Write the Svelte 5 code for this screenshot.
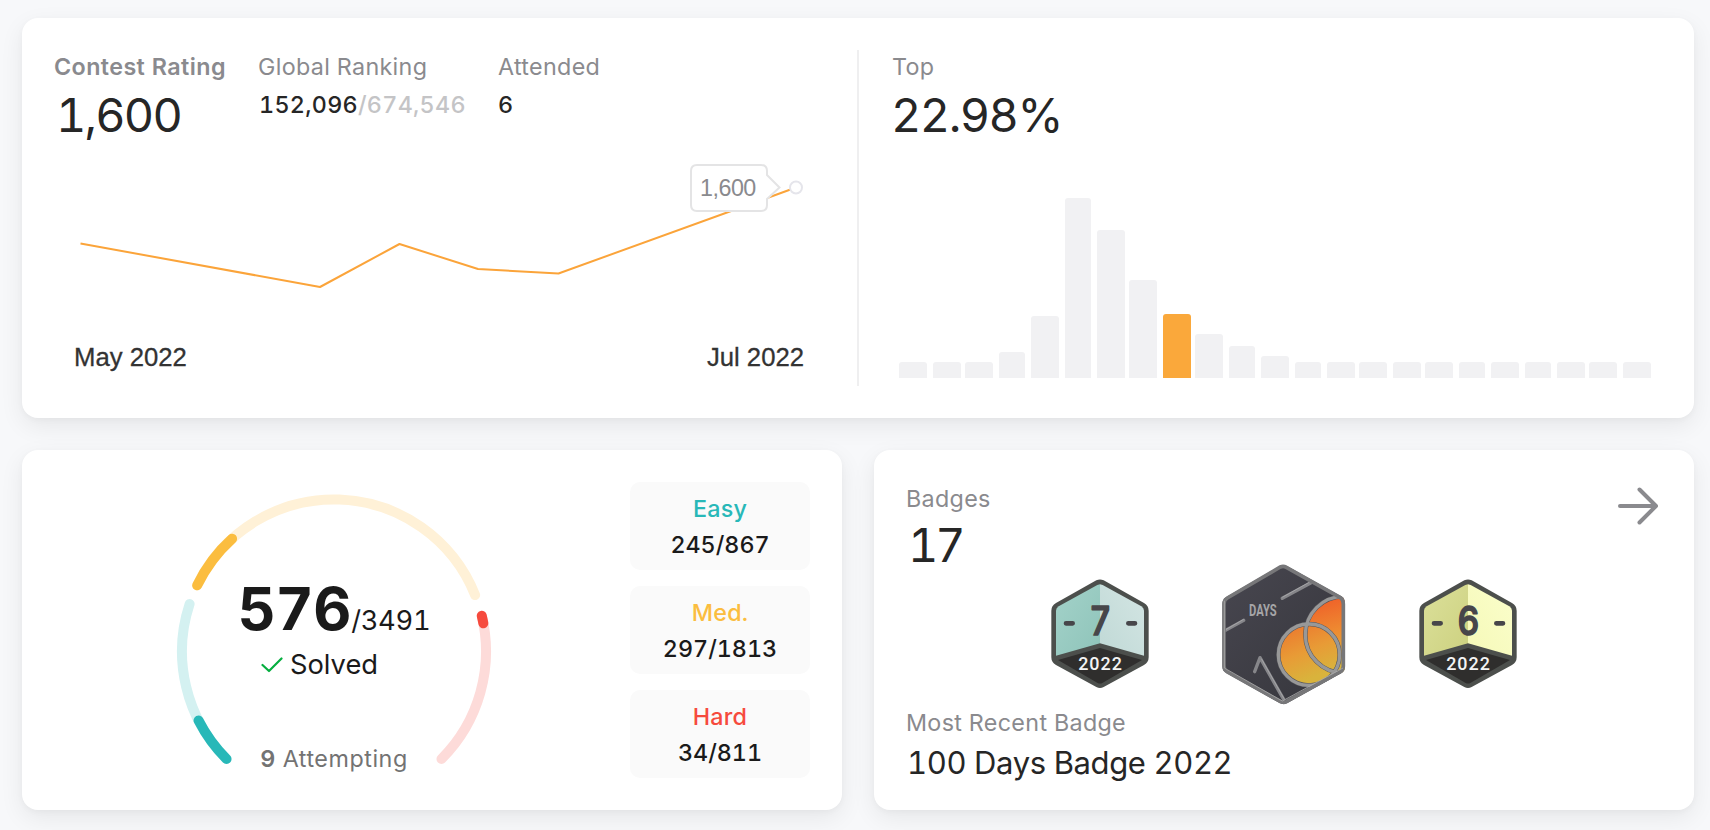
<script>
  const bars = [
    [899, 28, 16], [933, 28, 16], [965, 28, 16], [999, 26, 26], [1031, 28, 62], [1065, 26, 180],
    [1097, 28, 148], [1129, 28, 98], [1163, 28, 64], [1195, 28, 44], [1229, 26, 32], [1261, 28, 22],
    [1295, 26, 16], [1327, 28, 16], [1359, 28, 16], [1393, 28, 16], [1425, 28, 16], [1459, 26, 16],
    [1491, 28, 16], [1525, 26, 16], [1557, 28, 16], [1589, 28, 16], [1623, 28, 16]
  ];
  const current = 8;
  const bar = ([x, w, h]) => {
    const l = x - 892;
    return `M${l} 180V${183 - h}a3 3 0 0 1 3-3h${w - 6}a3 3 0 0 1 3 3V180z`;
  };

  // Angles run clockwise in degrees, measured from the leftmost point of the ring.
  const point = (deg) => {
    const a = (deg * Math.PI) / 180;
    return `${(160 - 152 * Math.cos(a)).toFixed(2)} ${(160.5 - 152 * Math.sin(a)).toFixed(2)}`;
  };
  const arc = (from, to) => `M${point(from)}A152 152 0 0 1 ${point(to)}`;
  const arcs = [
    { from: -45, fill: -27, to: 18.2, track: '#d4f1f1', color: '#28b8b8' },
    { from: 25.8, fill: 47.9, to: 158.2, track: '#fff1d7', color: '#fbbd3f' },
    { from: 166.4, fill: 169.3, to: 225, track: '#fddbd9', color: '#f64a3d' }
  ];
  const levels = [
    { name: 'Easy', count: '245/867', cls: 'easy' },
    { name: 'Med.', count: '297/1813', cls: 'med' },
    { name: 'Hard', count: '34/811', cls: 'hard' }
  ];
</script>

{#snippet monthly(id, digit, l1, l2, r1, r2)}
  <svg width="100" height="112" viewBox="510 384 300 336">
    <defs>
      <linearGradient id="{id}l" x1="0" y1="0" x2="1" y2="1">
        <stop offset="0" stop-color={l1} /><stop offset="1" stop-color={l2} />
      </linearGradient>
      <linearGradient id="{id}r" x1="0" y1="1" x2="1" y2="0">
        <stop offset="0" stop-color={r1} /><stop offset="1" stop-color={r2} />
      </linearGradient>
    </defs>
    <path d="M649 391Q660 386 671 391L792 459Q806 467 806 482V622Q806 637 792 645L671 711Q660 717 649 711L528 645Q514 637 514 622V482Q514 467 528 459Z" fill="#4c4f4c" />
    <path d="M660 403V580L528 617V482Q528 474 536 469L652 405Z" fill="url(#{id}l)" />
    <path d="M660 403V580L792 617V482Q792 474 784 469L668 405Z" fill="url(#{id}r)" />
    <path d="M660 594L786 630L667 699Q660 702 653 699L534 630Z" fill="#2f2e2d" />
    <path d="M558 520H578M745 520H765" stroke="#47464a" stroke-width="14" stroke-linecap="round" />
    <text class="digit" transform="translate(661 555) scale(.86 1)" text-anchor="middle">{digit}</text>
    <text class="year" x="661.5" y="659" textLength="134" lengthAdjust="spacingAndGlyphs" text-anchor="middle">2022</text>
  </svg>
{/snippet}

<main>
  <section class="card contest">
    <div class="rating">
      <div class="stats">
        <div class="stat first">
          <div class="label strong">Contest Rating</div>
          <div class="big rate">1,600</div>
        </div>
        <div class="stat second">
          <div class="label">Global Ranking</div>
          <div class="small world"><span class="rank">152,096</span><span class="total">/674,546</span></div>
        </div>
        <div class="stat">
          <div class="label">Attended</div>
          <div class="small">6</div>
        </div>
      </div>
      <svg class="line" width="772" height="190" viewBox="54 150 772 190">
        <polyline points="80.500,243.500 320,287 399.500,244 478,269 558.500,273.500 796,187.500" fill="none" stroke="#fba43a" stroke-width="2" stroke-linejoin="round" />
        <path d="M697 165H761Q767 165 767 171V175L779.500 187.500L767 199V205Q767 211 761 211H697Q691 211 691 205V171Q691 165 697 165Z" fill="#fff" stroke="#e4e4e5" stroke-width="2" />
        <circle cx="796" cy="187.500" r="6" fill="#fff" stroke="#e5e5eb" stroke-width="2" />
        <text class="tip" x="700" y="196">1,600</text>
      </svg>
      <div class="months"><span>May 2022</span><span>Jul 2022</span></div>
    </div>
    <div class="top">
      <div class="label">Top</div>
      <div class="big pct">22.98%</div>
      <svg class="bars" width="766" height="180" viewBox="0 0 766 180">
        {#each bars as b, i}
          <path d={bar(b)} fill={i === current ? '#faa83b' : '#f1f1f3'} />
        {/each}
      </svg>
    </div>
  </section>

  <div class="row">
    <section class="card solved">
      <div class="gauge">
        <svg width="320" height="280" viewBox="0 0 320 280">
          {#each arcs as a}
            <path d={arc(a.from, a.to)} fill="none" stroke={a.track} stroke-width="10" stroke-linecap="round" />
            <path d={arc(a.from, a.fill)} fill="none" stroke={a.color} stroke-width="10" stroke-linecap="round" />
          {/each}
        </svg>
        <div class="readout">
          <div class="sum"><b>576</b><span>/3491</span></div>
          <div class="done">
            <svg width="22" height="16" viewBox="0 0 22 16"><path d="M1.500 8L8 14L20.500 1.500" fill="none" stroke="#05ae3f" stroke-width="2.200" stroke-linecap="round" stroke-linejoin="round" /></svg>
            <span>Solved</span>
          </div>
          <div class="attempt"><b>9</b> Attempting</div>
        </div>
      </div>
      <div class="levels">
        {#each levels as l}
          <div class="level {l.cls}"><div class="name">{l.name}</div><div class="count">{l.count}</div></div>
        {/each}
      </div>
    </section>

    <section class="card badges">
      <header>
        <div>
          <div class="label">Badges</div>
          <div class="big seventeen">17</div>
        </div>
        <svg class="arrow" width="42" height="42" viewBox="0 0 42 42"><path d="M3 21H39M22.500 4.500L39 21L22.500 37.500" fill="none" stroke="#8a8a8e" stroke-width="4" stroke-linecap="round" stroke-linejoin="round" /></svg>
      </header>
      <div class="medals">
        {@render monthly('jul', '7', '#a3d2c9', '#8fc4ba', '#c0d9d6', '#d3e5e3')}
        <svg class="hundred" width="128" height="144" viewBox="61 64 384 432">
          <defs>
            <linearGradient id="face" x1="0" y1="0" x2="1" y2="1"><stop offset="0" stop-color="#484750" /><stop offset="1" stop-color="#35353b" /></linearGradient>
            <linearGradient id="sun" gradientUnits="userSpaceOnUse" x1="280" y1="260" x2="340" y2="410"><stop offset="0" stop-color="#ec7c2f" /><stop offset=".5" stop-color="#e89b36" /><stop offset="1" stop-color="#d9b33c" /></linearGradient>
            <linearGradient id="sun2" gradientUnits="userSpaceOnUse" x1="370" y1="180" x2="420" y2="370"><stop offset="0" stop-color="#ef6229" /><stop offset=".5" stop-color="#ee8b31" /><stop offset="1" stop-color="#d8b33e" /></linearGradient>
            <clipPath id="hex"><path d="M242 75Q251 71 262 76L424 167Q436 174 436 190V378Q436 391 424 398L262 488Q252 493 241 488L80 397Q68 390 68 378V190Q68 176 80 169Z" /></clipPath>
          </defs>
          <g clip-path="url(#hex)">
            <rect x="60" y="66" width="384" height="432" fill="url(#face)" />
            <circle cx="432" cy="282" r="115" fill="url(#sun2)" />
            <circle cx="328" cy="342" r="92" fill="url(#sun)" />
            <g fill="none" stroke="#55555a" stroke-width="13">
              <circle cx="432" cy="282" r="115" /><circle cx="328" cy="342" r="92" />
            </g>
            <g fill="none" stroke="#989898" stroke-width="10">
              <circle cx="432" cy="282" r="115" /><circle cx="328" cy="342" r="92" />
            </g>
            <path d="M248 173L334 126M76 270L132 239M165 393L181 351L252 476" fill="none" stroke="#86868a" stroke-width="10" stroke-linecap="round" stroke-linejoin="round" />
            <path d="M248 170L332 123M78 267L132 236M185 354L253 474" fill="none" stroke="#b4b4b5" stroke-width="2" />
          </g>
          <path d="M242 79Q251 75 260 80L421 170Q431 176 431 190V377Q431 388 421 394L260 483Q252 487 243 483L83 394Q73 388 73 377V190Q73 178 83 172Z" fill="none" stroke="#777779" stroke-width="11" />
          <path d="M74 180V382L248 481L430 382" fill="none" stroke="#aaa" stroke-width="2.500" />
          <text class="days" x="148" y="227" textLength="83" lengthAdjust="spacingAndGlyphs">DAYS</text>
        </svg>
        {@render monthly('jun', '6', '#dbe09a', '#cdd180', '#f5f9b8', '#fbfecb')}
      </div>
      <div class="label">Most Recent Badge</div>
      <div class="title">100 Days Badge 2022</div>
    </section>
  </div>
</main>

<style>
  :global(body) { background: #f7f8fa; }
  main {
    box-sizing: border-box;
    width: 1710px;
    height: 830px;
    padding: 18px 16px 20px 22px;
    display: flex;
    flex-direction: column;
    gap: 32px;
    overflow: hidden;
    font-family: Inter, sans-serif;
    font-variant-numeric: tabular-nums;
    color: #262626;
    white-space: nowrap;
  }
  .card {
    box-sizing: border-box;
    background: #fff;
    border-radius: 16px;
    padding: 32px;
    box-shadow: 0 2px 6px rgba(0, 0, 0, .03), 0 8px 24px rgba(0, 0, 0, .07);
  }
  svg { display: block; }
  .contest { height: 400px; display: flex; }
  .rating { width: 803px; height: 336px; border-right: 2px solid #efeff0; }
  .stats { display: flex; height: 100px; }
  .first { width: 204px; }
  .second { width: 240px; }
  .label { font-size: 23.3px; line-height: 32px; height: 31px; padding-top: 1px; color: #8a8a8e; letter-spacing: .33px; }
  .strong { font-weight: 600; letter-spacing: .4px; }
  .big { font-size: 46.8px; line-height: 66px; }
  .rate { padding-left: 2px; letter-spacing: -1.8px; }
  .pct { margin-left: -1px; letter-spacing: -1.5px; }
  .small { font-size: 23.3px; line-height: 45px; font-weight: 500; }
  .world { padding-left: 1px; letter-spacing: .3px; }
  .rank { font-weight: 550; }
  .total { color: #c4c4c6; }
  .tip { font: 23.3px "Liberation Sans", sans-serif; fill: #8a8a8e; letter-spacing: -.5px; }
  .months {
    display: flex;
    justify-content: space-between;
    padding: 0 53px 0 20px;
    font: 25.7px/34px "Liberation Sans", sans-serif;
    color: #333;
    -webkit-text-stroke: .3px #333;
  }
  .top { padding-left: 33px; }
  .bars { margin-top: 50px; }
  .row { display: flex; gap: 32px; }
  .row .card { width: 820px; height: 360px; }
  .solved { display: flex; gap: 16px; }
  .gauge { width: 560px; height: 289px; padding-top: 9px; display: grid; justify-items: center; }
  .gauge > * { grid-area: 1 / 1; }
  .readout { display: flex; flex-direction: column; align-items: center; padding-top: 88px; color: #1a1a1a; }
  .sum { display: flex; align-items: baseline; line-height: 60px; height: 60px; }
  .sum b { font-size: 59px; font-weight: 700; letter-spacing: -.3px; }
  .sum span { font-size: 27.3px; letter-spacing: -.3px; }
  .done { display: flex; align-items: center; gap: 7px; margin-right: 29px; font-size: 27.3px; line-height: 51px; }
  .attempt { margin-top: 53px; font-size: 23.3px; line-height: 32px; color: #737373; letter-spacing: .55px; }
  .attempt b { font-weight: 600; }
  .levels { display: flex; flex-direction: column; gap: 16px; }
  .level {
    box-sizing: border-box;
    width: 180px;
    height: 88px;
    padding-top: 9px;
    border-radius: 10px;
    background: #fafafa;
    text-align: center;
    font-size: 23.3px;
    font-weight: 500;
    line-height: 36px;
    color: #1a1a1a;
  }
  .name { font-weight: 550; letter-spacing: .2px; }
  .easy .name { color: #28b8b8; }
  .med .name { color: #fbbd3f; }
  .hard .name { color: #f64a3d; }
  header { display: flex; justify-content: space-between; height: 94px; }
  .seventeen { line-height: 62px; padding-left: 2px; letter-spacing: -3px; }
  .arrow { margin: 3px 3px 0 0; }
  .medals { display: flex; justify-content: center; align-items: center; gap: 70px; margin-top: -14px; }
  .title { font-size: 31px; line-height: 49px; padding-left: 1px; letter-spacing: -.38px; }
  .digit {
    font: 500 118px Inter, sans-serif;
    fill: #47464a;
    stroke: #47464a;
    stroke-width: 5;
    stroke-linejoin: round;
  }
  .year { font: 500 54px Roboto, sans-serif; fill: #f4f4f4; letter-spacing: 3px; }
  .days { font: 700 48px Roboto, sans-serif; fill: #a5a5a7; }
</style>
